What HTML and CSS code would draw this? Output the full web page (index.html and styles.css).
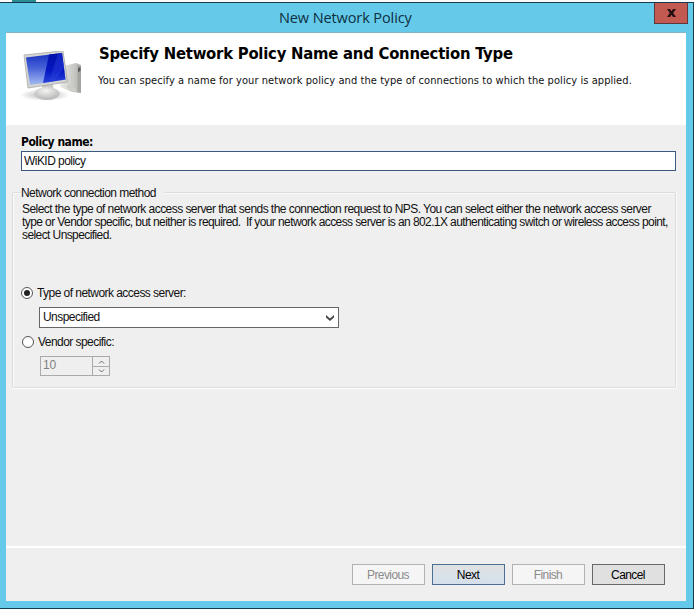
FILE: index.html
```html
<!DOCTYPE html>
<html lang="en">
<head>
<meta charset="utf-8">
<title>New Network Policy</title>
<link rel="stylesheet" href="styles.css">
</head>
<body>
<div class="backdrop"><i class="sliver"></i></div>
<div class="window">
  <div class="titlebar">
    <span class="title">New Network Policy</span>
    <button class="close" aria-label="Close"><svg width="9" height="8" viewBox="0 0 9 8"><path d="M0 0h3l1.500 2.200L6 0h3L6.200 4 9 8H6L4.500 5.800 3 8H0l2.800-4z" fill="#221010"/></svg></button>
  </div>
  <div class="client">
    <header class="header">
      <svg class="computer" width="64" height="54" viewBox="0 0 64 54">
        <defs>
          <linearGradient id="screen" x1="0" y1="0" x2="0" y2="1"><stop offset="0" stop-color="#1730c0"/><stop offset=".45" stop-color="#4560d6"/><stop offset="1" stop-color="#a4bbf2"/></linearGradient>
          <linearGradient id="glare" x1="0" y1="0" x2="0" y2="1"><stop offset="0" stop-color="#0010a8"/><stop offset=".6" stop-color="#0718c3"/><stop offset="1" stop-color="#2a44da"/></linearGradient>
          <linearGradient id="tower" x1="0" y1="0" x2="1" y2="0"><stop offset="0" stop-color="#ececea"/><stop offset="1" stop-color="#b4b4b1"/></linearGradient>
          <radialGradient id="foot" cx=".45" cy=".3" r=".7"><stop offset="0" stop-color="#f4f4f4"/><stop offset="1" stop-color="#b4b4b2"/></radialGradient>
          <radialGradient id="shade"><stop offset="0" stop-color="#999" stop-opacity=".75"/><stop offset="1" stop-color="#999" stop-opacity="0"/></radialGradient>
        </defs>
        <ellipse cx="25" cy="44" rx="25" ry="6" fill="url(#shade)"/>
        <path d="M44 15l12-3 5 2v28l-9-1-12-5z" fill="url(#tower)"/>
        <path d="M57.500 14l3.500 1v27l-3.500-1z" fill="#a4a4a1"/>
        <path d="M58 17l2.500-1v4l-2.500 1z" fill="#595957"/>
        <path d="M48 33l8 5v3l-9-4z" fill="#cecec9"/>
        <path d="M22 34l11-1 1 11H23z" fill="#c9c9c6"/>
        <ellipse cx="27" cy="42.500" rx="12.500" ry="6.500" fill="url(#foot)"/>
        <path d="M4 4L43-.2 47.500 31 8 37z" fill="#d4d4d2" stroke="#a9a9a7" stroke-width=".8"/>
        <path d="M6 6.500L42 2 45.500 28.500 10 34z" fill="url(#screen)"/>
        <path d="M29 3.600L42 2 45.500 28.500 23 32z" fill="url(#glare)"/>
        <path d="M38 2.500L42 2 44 17 35 30 29 31z" fill="#2c45df" opacity=".4"/>
      </svg>
      <div>
        <h1>Specify Network Policy Name and Connection Type</h1>
        <p class="intro">You can specify a name for your network policy and the type of connections to which the policy is applied.</p>
      </div>
    </header>
    <main class="content">
      <label class="name-label" for="name">Policy name:</label>
      <div class="name-box" id="name">WiKID policy</div>
      <section class="group">
        <div class="legend"><span>Network connection method</span></div>
        <p class="desc"><span>Select the type of network access server that sends the connection request to NPS. You can select either the network access server</span><span class="tight">type or Vendor specific, but neither is required.&nbsp; If your network access server is an 802.1X authenticating switch or wireless access point,</span><span class="tight">select Unspecified.</span></p>
        <div class="option"><i class="radio on"></i><span>Type of network access server:</span></div>
        <div class="select"><span>Unspecified</span><svg width="8" height="6" viewBox="0 0 8 6"><path d="M0 0l4 3.500L8 0v2.500L4 6 0 2.500z" fill="#444"/></svg></div>
        <div class="option vendor"><i class="radio"></i><span>Vendor specific:</span></div>
        <div class="spinner"><span>10</span><div class="arrows">
          <b><svg width="7" height="4" viewBox="0 0 7 4"><path d="M1 3.500l2.500-2.500 2.500 2.500" fill="none" stroke="#666"/></svg></b>
          <b><svg width="7" height="4" viewBox="0 0 7 4"><path d="M1 .500l2.500 2.500 2.500-2.500" fill="none" stroke="#666"/></svg></b>
        </div></div>
      </section>
    </main>
    <footer class="footer">
      <button class="btn off">Previous</button>
      <button class="btn next">Next</button>
      <button class="btn off">Finish</button>
      <button class="btn">Cancel</button>
    </footer>
  </div>
</div>
</body>
</html>
```
FILE: styles.css
```css
* { box-sizing: border-box; }
body {
  margin: 0; width: 694px; height: 609px; overflow: hidden; background: #fafafa;
  font: 12px/13px "Liberation Sans", Arial, sans-serif; letter-spacing: -0.55px; color: #111;
}
h1, p { margin: 0; }
button { font: inherit; color: inherit; padding: 0; border-radius: 0; }
.backdrop { height: 2px; padding-left: 12px; }
.sliver { display: block; width: 24px; height: 2px; background: #2c8b93; }
.window {
  height: 607px; background: #65c9ea; padding: 0 7px 7px 6px;
  border: 1px solid #123d50; border-width: 1px 1px 1px 0;
}
.titlebar { position: relative; height: 30px; border-bottom: 1px solid #86b4c5; }
.title {
  display: block; padding-left: 273px; font: 14.5px/29px "Open Sans", "Noto Sans", sans-serif;
  color: #0c303e; white-space: nowrap; letter-spacing: -0.1px;
}
.close {
  position: absolute; right: -2px; top: 0; width: 34px; height: 21px;
  background: #c35a52; border: 1px solid #60373b; border-top: 0;
  display: flex; align-items: center; justify-content: center;
}
.client { height: 568px; background: #efefef; display: flex; flex-direction: column; }
.header { height: 92px; background: #fff; display: flex; }
.computer { margin: 18px 15px 0 14px; flex: none; filter: blur(.35px); }
h1 {
  margin-top: 10px; font: bold 16.5px/21px "DejaVu Sans Condensed", "DejaVu Sans", sans-serif;
  letter-spacing: -0.23px; color: #000; white-space: nowrap;
}
.intro {
  margin: 9px 0 0 -1px; font: 11px/16px "DejaVu Sans Condensed", "DejaVu Sans", sans-serif;
  letter-spacing: 0.07px; white-space: nowrap;
}
.content { flex: 1; padding: 10px 10px 0 6px; }
.name-label {
  display: block; margin-left: 9px; font: bold 12px/15px "DejaVu Sans Condensed", "DejaVu Sans", sans-serif;
  letter-spacing: -0.5px; color: #000;
}
.name-box {
  margin: 1px 0 0 9px; height: 20px; background: #fff; border: 1px solid #38597d;
  padding-left: 2px; line-height: 18px;
}
.group {
  margin-top: 21px; height: 196px; border: 1px solid #dcdcdc;
  border-radius: 2px; box-shadow: inset 1px 1px #fafafa, 0 1px #fff, 1px 0 #fafafa; padding-left: 8px;
}
.legend { height: 9px; margin-top: -8px; line-height: 16px; }
.legend span { display: inline-block; background: #efefef; padding-right: 8px; }
.desc { margin: 9px 0 0 1px; white-space: nowrap; }
.desc span { display: block; }
.desc .tight { letter-spacing: -0.59px; }
.option { display: flex; align-items: center; gap: 4px; height: 14px; margin-top: 44px; }
.radio { width: 12px; height: 12px; border: 1px solid #555; border-radius: 50%; background: #fff; }
.on { display: grid; place-items: center; }
.on::after { content: ""; width: 6px; height: 6px; border-radius: 50%; background: #222; }
.select {
  margin: 7px 0 0 18px; width: 300px; height: 21px; border: 1px solid #666; background: #fff;
  display: flex; align-items: center; justify-content: space-between; padding: 0 4px 0 3px;
}
.vendor { margin: 7px 0 0 1px; }
.spinner {
  margin: 7px 0 0 19px; width: 70px; height: 20px; border: 1px solid #aaa; color: #808080;
  display: flex; justify-content: space-between; padding-left: 2px; line-height: 17px; letter-spacing: -0.2px;
}
.arrows { width: 17px; display: grid; grid-template-rows: 1fr 1fr; border-left: 1px solid #aaa; }
.arrows b { display: grid; place-items: center; }
.arrows b + b { border-top: 1px solid #aaa; }
.footer { height: 55px; border-top: 2px solid #fff; padding: 16px 21px 0 0; display: flex; justify-content: flex-end; gap: 7px; }
.btn { width: 73px; height: 21px; background: #e0e0e0; border: 1px solid #686868; letter-spacing: -0.6px; padding: 1px 1px 0 0; color: #000; }
.off { background: #f5f5f5; border-color: #b2b2b2; color: #8b8b8b; }
.next { border-color: #4b6f90; background: linear-gradient(#dfe1e3, #d5e0ec); }
```
